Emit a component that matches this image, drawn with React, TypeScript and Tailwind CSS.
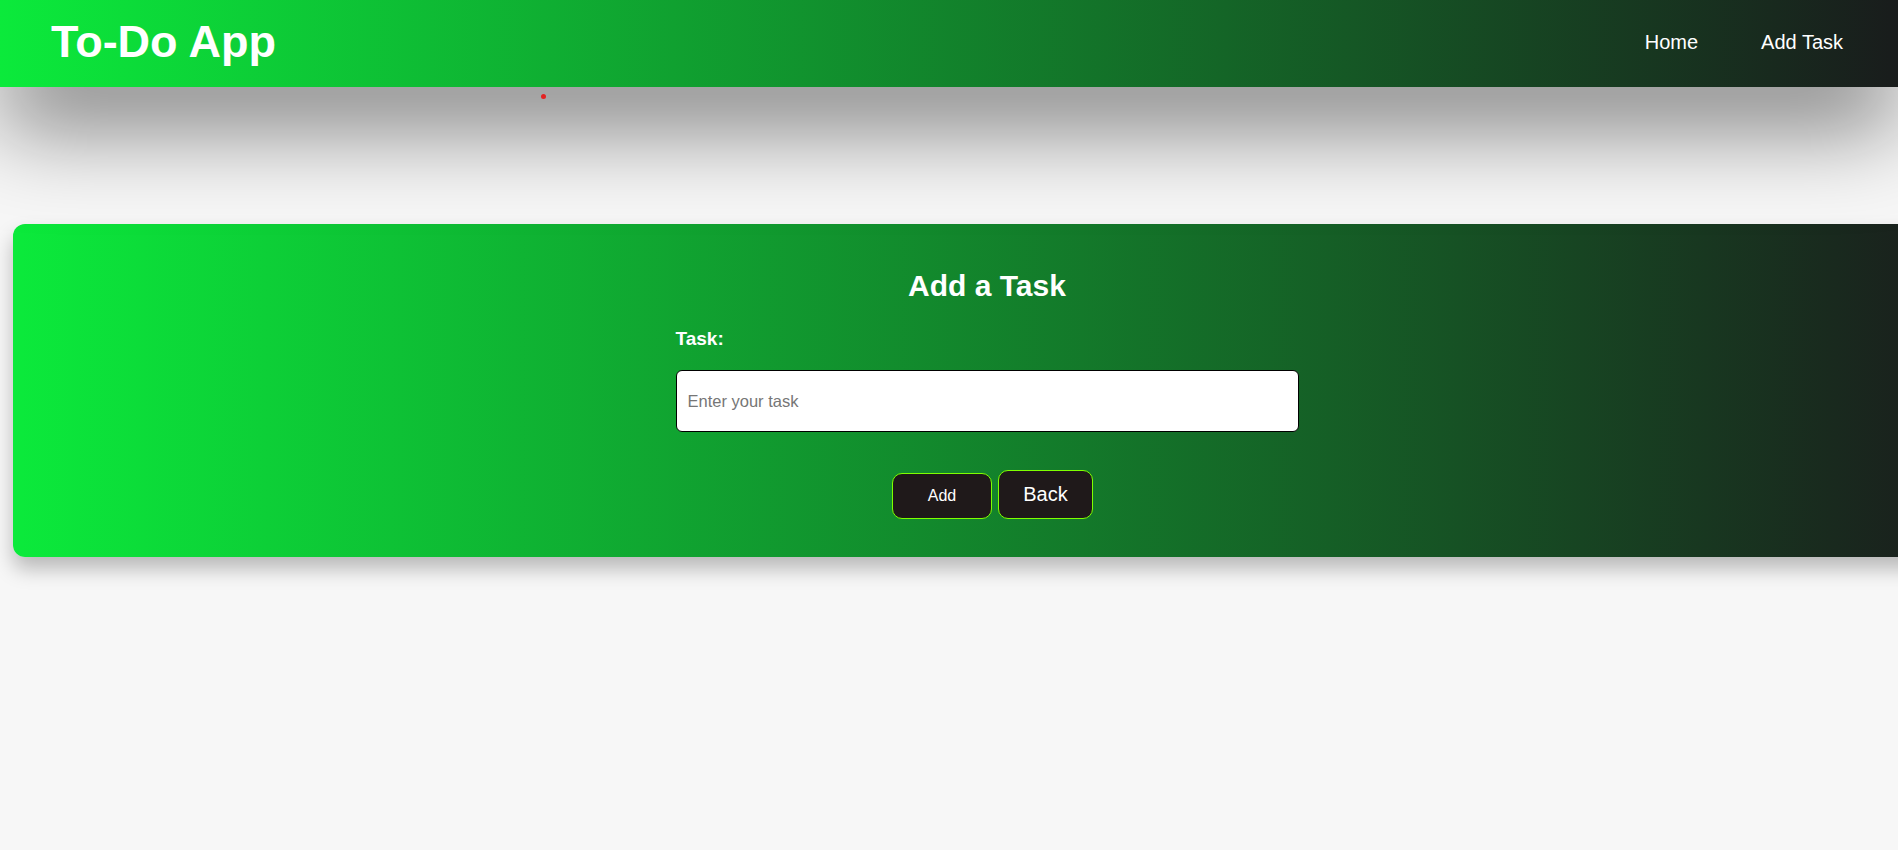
export default function App() {
  return (
    <div className="relative min-h-[850px] w-full overflow-hidden bg-[#f7f7f7] font-['Liberation_Sans',Arial,sans-serif]">
      {/* Header */}
      <header className="relative z-10 flex h-[87px] w-full items-start justify-between bg-[linear-gradient(to_right,#0bea3b,#191c1c)] pl-[51px] pr-[55px] shadow-[0_40px_90px_rgba(0,0,0,0.5)]">
        <h1 className="mt-[16px] text-[45px] font-bold leading-[1.15] text-white">
          To-Do App
        </h1>
        <nav className="mt-[31px] flex gap-[63px] text-[20px] leading-[1.15] text-white">
          <a href="#">Home</a>
          <a href="#">Add Task</a>
        </nav>
      </header>

      {/* stray dot under header */}
      <span className="absolute left-[541px] top-[94px] z-20 h-[5px] w-[5px] rounded-full bg-[#e32222]" />

      <main className="pt-[137px]">
        <div className="ml-[13px] flex w-[1948px] flex-col items-center rounded-[12px] bg-[linear-gradient(to_right,#0bea3b,#1a1c1c)] pb-[38px] pt-[45px] shadow-[0_12px_20px_rgba(0,0,0,0.25)]">
          <div className="flex w-[623px] flex-col">
            <h2 className="text-center text-[30px] font-bold leading-[1.15] text-white">
              Add a Task
            </h2>
            <label className="mt-[24px] text-[19px] font-bold leading-[1.15] text-white">
              Task:
            </label>
            <input
              type="text"
              placeholder="Enter your task"
              className="mt-[21px] h-[62px] w-full rounded-[6px] border border-black bg-white px-[11px] text-[16.5px] text-black placeholder:text-[#767676] focus:outline-none"
            />
            <div className="ml-[11px] mt-[38px] flex items-end justify-center gap-[6px]">
              <button className="h-[46px] w-[100px] rounded-[10px] border border-[#7fff00] bg-[#1f191a] text-[16px] leading-[1.15] text-white">
                Add
              </button>
              <button className="h-[49px] w-[95px] rounded-[10px] border border-[#7fff00] bg-[#1f191a] text-[20px] leading-[1.15] text-white">
                Back
              </button>
            </div>
          </div>
        </div>
      </main>
    </div>
  );
}
